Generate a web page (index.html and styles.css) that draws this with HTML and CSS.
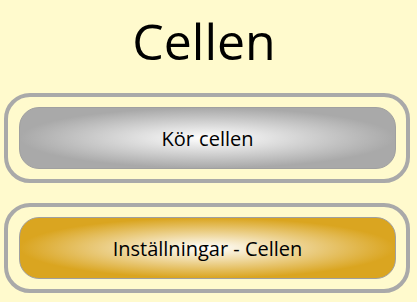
FILE: index.html
```html
<!DOCTYPE html>
<html lang="sv">
<head>
<meta charset="utf-8">
<title>Cellen</title>
<link rel="stylesheet" href="styles.css">
</head>
<body>
<div class="page">
  <h1 class="title">Cellen</h1>
  <div class="frame">
    <button class="btn btn-gray" type="button">Kör cellen</button>
  </div>
  <div class="frame">
    <button class="btn btn-gold" type="button">Inställningar - Cellen</button>
  </div>
</div>
</body>
</html>
```

FILE: styles.css
```css
html, body {
  margin: 0;
  padding: 0;
  background: #fffacd;
}
body {
  font-family: "Open Sans", "Noto Sans", sans-serif;
  color: #000;
}
.page {
  width: 417px;
  height: 302px;
  box-sizing: border-box;
  padding: 9px 7px 0 4px;
  display: flex;
  flex-direction: column;
  gap: 20px;
}
.title {
  margin: 0;
  padding-right: 6px;
  font-size: 50px;
  font-weight: 400;
  line-height: 64px;
  text-align: center;
}
.frame {
  border: 4px solid #a9a9a9;
  border-radius: 26px;
  padding: 10px 10px 10px 11px;
  display: flex;
}
.btn {
  flex: 1;
  height: 62px;
  border: 1px solid #a0a0a0;
  border-radius: 20px;
  font-family: inherit;
  font-size: 20px;
  color: #000;
  padding: 0;
  display: flex;
  align-items: center;
  justify-content: center;
}
.btn-gray {
  background: radial-gradient(closest-side, #ffffff 0%, #a9a9a9 100%);
}
.btn-gold {
  background: radial-gradient(closest-side, #ffffff 0%, #daa520 100%);
}
```
